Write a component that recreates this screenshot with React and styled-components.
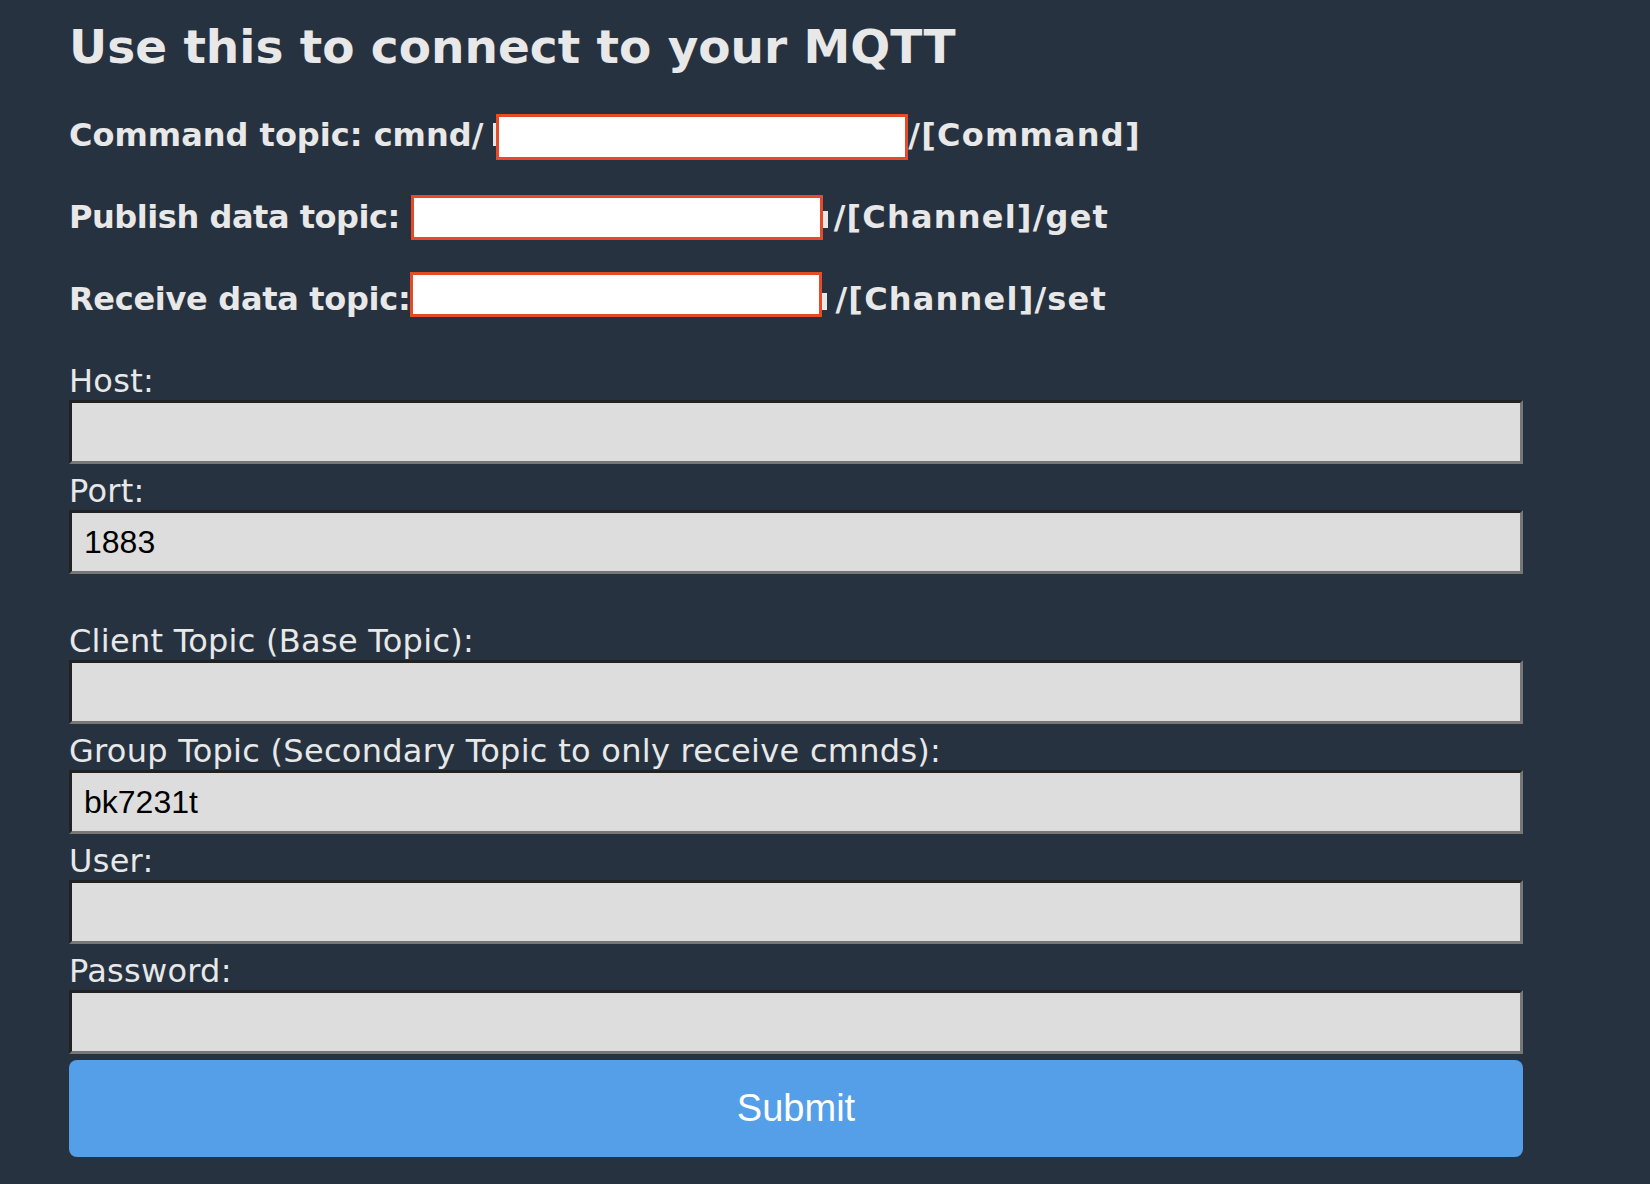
import React from "react";
import styled, { createGlobalStyle } from "styled-components";

const GlobalStyle = createGlobalStyle`
  html, body {
    margin: 0;
    padding: 0;
    background: #263240;
  }
  body {
    font-family: "DejaVu Sans", Verdana, sans-serif;
    color: #e8e8e8;
  }
`;

const Page = styled.main`
  width: 1454px;
  padding: 0 0 26px 69px;
  display: flex;
  flex-direction: column;
`;

const Heading = styled.h1`
  margin: 19px 0 0;
  font-size: 47px;
  font-weight: bold;
  line-height: normal;
  color: #e8e8e8;
`;

const TopicList = styled.div`
  margin-top: 35px;
  display: flex;
  flex-direction: column;
  gap: 29.5px;
`;

const TopicLine = styled.div`
  font-size: 32px;
  font-weight: bold;
  line-height: 52px;
  height: 52px;
  white-space: nowrap;
`;

const Prefix = styled.span`
  letter-spacing: ${(p) => p.$ls || 0}px;
`;

const Suffix = styled.span`
  letter-spacing: 1.2px;
`;

const Redacted = styled.span`
  display: inline-block;
  box-sizing: border-box;
  width: ${(p) => p.$w}px;
  height: ${(p) => p.$h}px;
  margin-left: ${(p) => p.$ml || 0}px;
  vertical-align: ${(p) => -p.$drop}px;
  background: #ffffff;
  border: 3px solid #e64a27;
`;

const Sliver = styled.span`
  display: inline-block;
  width: ${(p) => p.$w}px;
  height: ${(p) => p.$h}px;
  margin-left: ${(p) => p.$ml || 0}px;
  margin-right: ${(p) => p.$mr || 0}px;
  background: #e8e8e8;
  vertical-align: baseline;
`;

const Form = styled.form`
  margin-top: 30px;
  display: flex;
  flex-direction: column;
`;

const FieldLabel = styled.label`
  display: block;
  margin-top: 9px;
  font-size: 32px;
  line-height: 37px;
  letter-spacing: 0.28px;
  color: #e8e8e8;
`;

const TextInput = styled.input`
  display: block;
  box-sizing: border-box;
  width: 100%;
  height: 64px;
  margin: 0;
  padding: 0 12px;
  border-style: solid;
  border-width: 3px;
  border-color: #222222 #777777 #777777 #222222;
  background: #dddddd;
  color: #000000;
  font-family: "Liberation Sans", Arial, sans-serif;
  font-size: 32px;
  outline: none;
`;

const Spacer = styled.div`
  height: 40px;
`;

const SubmitButton = styled.button`
  margin-top: 6px;
  height: 97px;
  width: 100%;
  border: none;
  border-radius: 8px;
  background: #549fe8;
  color: #ffffff;
  font-family: "Liberation Sans", Arial, sans-serif;
  font-size: 38px;
  cursor: pointer;
`;

const fields = [
  { id: "host", label: "Host:", value: "" },
  { id: "port", label: "Port:", value: "1883", spaceAfter: true },
  { id: "client", label: "Client Topic (Base Topic):", value: "" },
  { id: "group", label: "Group Topic (Secondary Topic to only receive cmnds):", value: "bk7231t" },
  { id: "user", label: "User:", value: "" },
  { id: "password", label: "Password:", value: "", type: "password" },
];

export default function App() {
  return (
    <>
      <GlobalStyle />
      <Page>
        <Heading>Use this to connect to your MQTT</Heading>
        <TopicList>
          <TopicLine>
            <Prefix>Command topic: cmnd/</Prefix>
            <Sliver $w={3} $h={23} $ml={10} />
            <Redacted $w={412} $h={46} $drop={14} />
            <Suffix>/[Command]</Suffix>
          </TopicLine>
          <TopicLine>
            <Prefix $ls={-0.45}>Publish data topic: </Prefix>
            <Redacted $w={412} $h={45} $drop={12} />
            <Sliver $w={5} $h={17} $mr={6} />
            <Suffix>/[Channel]/get</Suffix>
          </TopicLine>
          <TopicLine>
            <Prefix $ls={-0.3}>Receive data topic:</Prefix>
            <Redacted $w={412} $h={45} $drop={7} />
            <Sliver $w={5} $h={17} $mr={8} />
            <Suffix>/[Channel]/set</Suffix>
          </TopicLine>
        </TopicList>
        <Form onSubmit={(e) => e.preventDefault()}>
          {fields.map((f) => (
            <React.Fragment key={f.id}>
              <FieldLabel htmlFor={f.id}>{f.label}</FieldLabel>
              <TextInput id={f.id} type={f.type || "text"} defaultValue={f.value} />
              {f.spaceAfter && <Spacer />}
            </React.Fragment>
          ))}
          <SubmitButton type="submit">Submit</SubmitButton>
        </Form>
      </Page>
    </>
  );
}
